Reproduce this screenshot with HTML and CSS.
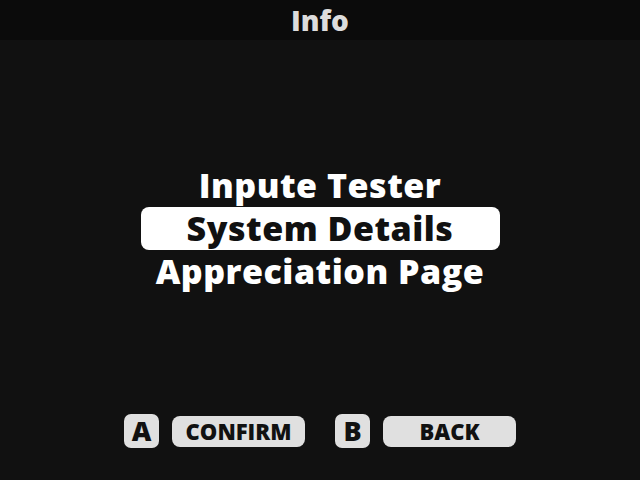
FILE: index.html
```html
<!DOCTYPE html>
<html>
<head>
<meta charset="utf-8">
<link rel="stylesheet" href="styles.css">
</head>
<body>
<div class="screen">
  <header class="header">Info</header>
  <main class="menu">
    <div class="item">Inpute Tester</div>
    <div class="item selected">System Details</div>
    <div class="item">Appreciation Page</div>
  </main>
  <footer class="footer">
    <div class="hint">
      <span class="key">A</span>
      <span class="label">CONFIRM</span>
    </div>
    <div class="hint">
      <span class="key">B</span>
      <span class="label">BACK</span>
    </div>
  </footer>
</div>
</body>
</html>
```
FILE: styles.css
```css
html, body {
  margin: 0;
  padding: 0;
  background: #111111;
}
.screen {
  width: 640px;
  height: 480px;
  display: flex;
  flex-direction: column;
  font-family: "Open Sans", "DejaVu Sans", sans-serif;
  font-weight: 800;
  color: #ffffff;
}
.header {
  height: 40px;
  background: #0b0b0b;
  color: #dcdcdc;
  font-size: 28px;
  line-height: 40px;
  text-align: center;
}
.menu {
  flex: 1;
  display: flex;
  flex-direction: column;
  align-items: center;
  justify-content: center;
  padding-top: 2px;
}
.item {
  font-size: 34px;
  line-height: 43px;
  height: 43px;
  text-align: center;
  letter-spacing: 0.5px;
}
.item.selected {
  background: #ffffff;
  color: #111111;
  width: 359px;
  border-radius: 8px;
}
.footer {
  height: 66px;
  display: flex;
  justify-content: center;
  align-items: flex-start;
  gap: 30px;
}
.hint {
  display: flex;
  align-items: center;
  gap: 13px;
}
.key {
  width: 35px;
  height: 34px;
  background: #e0e0e0;
  color: #111;
  border-radius: 7px;
  font-size: 27px;
  line-height: 34px;
  text-align: center;
}
.label {
  height: 31px;
  background: #e0e0e0;
  color: #111;
  border-radius: 8px;
  font-size: 22px;
  line-height: 31px;
  text-align: center;
  width: 133px;
}
```
